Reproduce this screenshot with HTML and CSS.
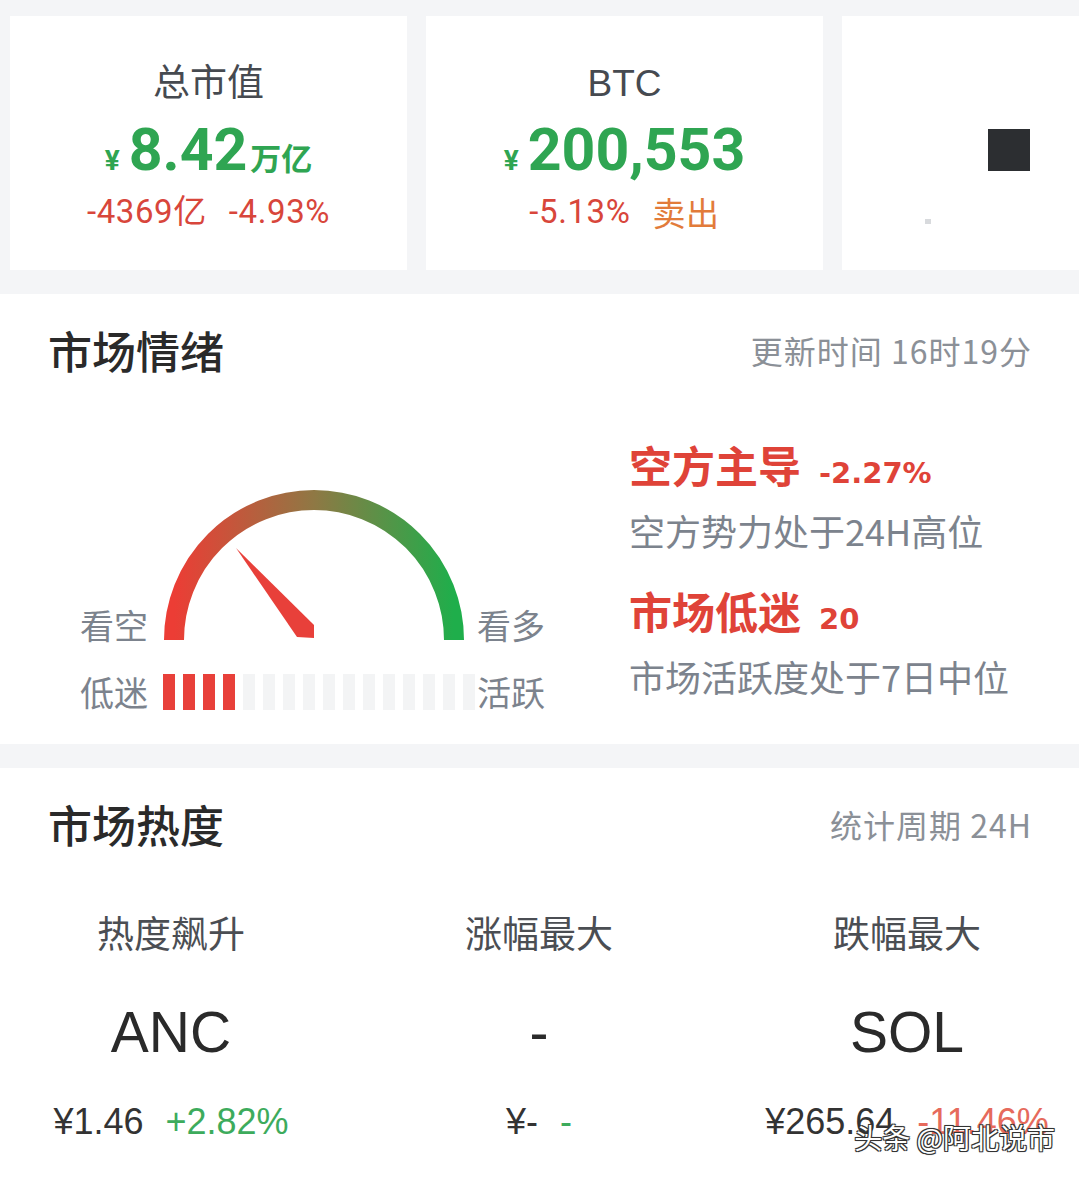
FILE: index.html
```
<!DOCTYPE html>
<html lang="zh-CN">
<head>
    <meta charset="UTF-8">
    <meta name="viewport" content="width=device-width, initial-scale=1.0">
    <title>行情 - 市场情绪</title>
    <link rel="stylesheet" href="styles.css">
</head>
<body>
    <!-- 顶部卡片 -->
    <div class="overview">
        <div class="card">
            <div class="card-title">总市值</div>
            <div class="card-value"><span class="yen">¥</span><span class="num">8.42</span><span class="unit">万亿</span></div>
            <div class="card-change"><span>-4369亿</span><span>-4.93%</span></div>
        </div>
        <div class="card">
            <div class="card-title">BTC</div>
            <div class="card-value"><span class="yen">¥</span><span class="num">200,553</span></div>
            <div class="card-change"><span>-5.13%</span><span class="sell">卖出</span></div>
        </div>
        <div class="card card-blank">
            <div class="box"></div>
            <div class="speck"></div>
        </div>
    </div>

    <!-- 市场情绪 -->
    <section class="panel">
        <div class="panel-head">
            <h2>市场情绪</h2>
            <span class="panel-note">更新时间 16时19分</span>
        </div>
        <div class="mood">
            <div class="gauge">
                <div class="lbl lbl-top">看空</div>
                <svg class="dial" width="302" height="152" viewBox="0 0 302 152">
                    <defs>
                        <linearGradient id="arcGrad" x1="0" y1="0" x2="1" y2="0">
                            <stop offset="0" stop-color="#ec3d35"/>
                            <stop offset="0.5" stop-color="#8f7844"/>
                            <stop offset="1" stop-color="#1fae4b"/>
                        </linearGradient>
                    </defs>
                    <path d="M11 152 A140 140 0 0 1 291 152" fill="none" stroke="url(#arcGrad)" stroke-width="20"/>
                    <polygon points="73,60 134,149 151,150 151,137" fill="#e8403a"/>
                </svg>
                <div class="lbl lbl-top">看多</div>

                <div class="lbl lbl-bottom">低迷</div>
                <div class="bars">
                    <span class="on"></span><span class="on"></span><span class="on"></span><span class="on"></span>
                    <span></span><span></span><span></span><span></span>
                    <span></span><span></span><span></span><span></span>
                    <span></span><span></span><span></span><span></span>
                </div>
                <div class="lbl lbl-bottom">活跃</div>
            </div>

            <div class="mood-info">
                <div class="mood-item">
                    <div class="mood-title">空方主导<span class="val">-2.27%</span></div>
                    <div class="mood-desc">空方势力处于24H高位</div>
                </div>
                <div class="mood-item">
                    <div class="mood-title">市场低迷<span class="val">20</span></div>
                    <div class="mood-desc">市场活跃度处于7日中位</div>
                </div>
            </div>
        </div>
    </section>

    <!-- 市场热度 -->
    <section class="panel heat">
        <div class="panel-head">
            <h2>市场热度</h2>
            <span class="panel-note">统计周期 24H</span>
        </div>
        <div class="heat-grid">
            <div class="heat-col">
                <div class="heat-label">热度飙升</div>
                <div class="heat-sym">ANC</div>
                <div class="heat-price">¥1.46<span class="up">+2.82%</span></div>
            </div>
            <div class="heat-col">
                <div class="heat-label">涨幅最大</div>
                <div class="heat-sym">-</div>
                <div class="heat-price">¥-<span class="up">-</span></div>
            </div>
            <div class="heat-col">
                <div class="heat-label">跌幅最大</div>
                <div class="heat-sym">SOL</div>
                <div class="heat-price">¥265.64<span class="down">-11.46%</span></div>
            </div>
        </div>
        <div class="watermark">头条 @阿北说市</div>
    </section>
</body>
</html>
```

FILE: styles.css
```
/* 基本样式 */
body {
    margin: 0;
    padding: 0;
    background-color: #f4f5f7;
    font-family: "Noto Sans CJK SC", sans-serif;
    color: #333;
}

/* 顶部卡片 */
.overview {
    display: flex;
    gap: 19px;
    padding: 16px 0 24px 10px;
    overflow: hidden;
}

.card {
    flex: 0 0 397px;
    height: 254px;
    box-sizing: border-box;
    padding-top: 46px;
    background-color: #fff;
    text-align: center;
}

.card-title {
    font-family: "Liberation Sans", "Noto Sans CJK SC", sans-serif;
    font-size: 37px;
    line-height: 44px;
    color: #464a50;
}

.card-value {
    margin-top: 12px;
    height: 64px;
    line-height: 64px;
    color: #2fa552;
    white-space: nowrap;
}

.card-value .yen {
    font-family: Roboto, sans-serif;
    font-weight: 700;
    font-size: 28px;
    margin-right: 9px;
}

.card-value .num {
    font-family: Roboto, sans-serif;
    font-weight: 700;
    font-size: 59px;
}

.card-value .unit {
    font-weight: 700;
    font-size: 31px;
    margin-left: 3px;
}

.card-change {
    display: flex;
    justify-content: center;
    gap: 22px;
    margin-top: 10px;
    font-family: Roboto, "Noto Sans CJK SC", sans-serif;
    font-size: 33px;
    line-height: 40px;
    color: #d8463b;
    letter-spacing: 0.6px;
}

.card-change .sell {
    font-family: "Noto Sans CJK SC", sans-serif;
    color: #e27b3a;
}

.card-blank {
    position: relative;
    padding: 113px 0 0 146px;
    text-align: left;
}

.card-blank .box {
    width: 42px;
    height: 42px;
    background-color: #2c2e31;
}

.card-blank .speck {
    position: absolute;
    left: 83px;
    top: 203px;
    width: 6px;
    height: 5px;
    background-color: #d8dadd;
}

/* 面板 */
.panel {
    background-color: #fff;
}

.panel-head {
    display: flex;
    justify-content: space-between;
    align-items: center;
    padding: 31px 47px 0 48px;
}

.panel-head h2 {
    margin: 0;
    font-size: 44px;
    font-weight: 500;
    line-height: 50px;
    color: #2a2a2a;
}

.panel-note {
    font-size: 32px;
    color: #8b9097;
    letter-spacing: 1px;
}

/* 市场情绪 */
.mood {
    display: flex;
    align-items: flex-start;
    padding: 64px 0 34px 80px;
}

.gauge {
    display: grid;
    grid-template-columns: 83px 314px 70px;
    grid-template-rows: 152px 36px;
    row-gap: 34px;
    margin-top: 49px;
}

.lbl {
    font-size: 34px;
    color: #7c838d;
    white-space: nowrap;
}

.lbl-top {
    align-self: end;
    line-height: 30px;
}

.lbl-bottom {
    align-self: center;
    line-height: 36px;
}

.dial {
    display: block;
}

.bars {
    display: flex;
    gap: 8px;
}

.bars span {
    width: 12px;
    height: 36px;
    background-color: #f3f4f5;
}

.bars .on {
    background-color: #e8403a;
}

.mood-info {
    margin-left: 82px;
}

.mood-item + .mood-item {
    margin-top: 32px;
}

.mood-title {
    font-size: 43px;
    font-weight: 700;
    line-height: 50px;
    color: #df4338;
    white-space: nowrap;
}

.mood-title .val {
    font-family: "DejaVu Sans", sans-serif;
    font-size: 29px;
    margin-left: 18px;
}

.mood-desc {
    margin-top: 9px;
    font-size: 36px;
    line-height: 46px;
    color: #7c838d;
    white-space: nowrap;
}

/* 市场热度 */
.heat {
    position: relative;
    margin-top: 24px;
    min-height: 430px;
}

.heat-grid {
    display: grid;
    grid-template-columns: repeat(3, 300px);
    column-gap: 68px;
    padding: 61px 21px 0;
    text-align: center;
}

.heat-label {
    font-size: 37px;
    line-height: 44px;
    color: #4b4e53;
}

.heat-sym {
    margin-top: 44px;
    font-family: "Liberation Sans", sans-serif;
    font-size: 57px;
    line-height: 68px;
    color: #2a2a2a;
}

.heat-price {
    margin-top: 35px;
    font-family: "Liberation Sans", sans-serif;
    font-size: 36px;
    line-height: 42px;
    color: #333;
    white-space: nowrap;
}

.heat-price .up {
    margin-left: 22px;
    color: #3dab5c;
}

.heat-price .down {
    margin-left: 22px;
    color: #e66a5c;
}

/* 水印 */
.watermark {
    position: absolute;
    right: 24px;
    top: 352px;
    font-size: 28px;
    line-height: 34px;
    color: #fff;
    text-shadow: -1px -1px 0 #333, 1px -1px 0 #333, -1px 1px 0 #333, 1px 1px 0 #333, 0 0 2px #000;
}
```
